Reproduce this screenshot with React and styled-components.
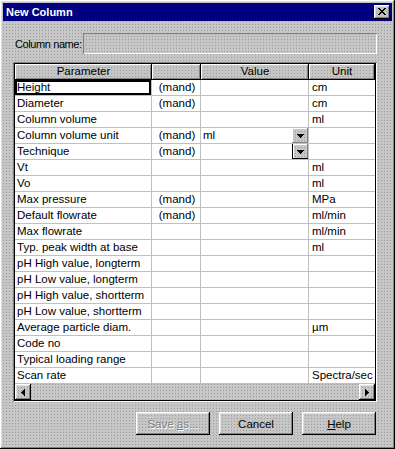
import React from "react";
import styled, { createGlobalStyle, css } from "styled-components";

const GlobalStyle = createGlobalStyle`
  html, body {
    margin: 0;
    padding: 0;
    background: #c0c0c0;
  }
  * {
    box-sizing: border-box;
  }
`;

// dithered grey face, like the old 256 colour screenshots
const dither = css`
  background-color: #9c9c9c;
  background-image: conic-gradient(from 270deg at 1px 1px, transparent 90deg, #c6c6c6 0);
  background-size: 3px 3px;
`;

const raised = css`
  box-shadow: inset -1px -1px #000, inset 1px 1px #fff, inset -2px -2px #808080,
    inset 2px 2px #dfdfdf;
`;

const Window = styled.div`
  ${dither};
  width: 395px;
  height: 449px;
  padding: 3px;
  display: flex;
  flex-direction: column;
  font-family: "Liberation Sans", Arial, sans-serif;
  font-size: 11.5px;
  color: #000;
  ${raised};
`;

const TitleBar = styled.div`
  height: 18px;
  background: #000080;
  display: flex;
  align-items: center;
  justify-content: space-between;
  padding: 0 2px 0 2px;
`;

const Title = styled.span`
  color: #fff;
  font-weight: bold;
  font-size: 11px;
  margin-left: 1px;
`;

const CloseButton = styled.div`
  width: 16px;
  height: 14px;
  background: #c0c0c0;
  ${raised};
  display: flex;
  align-items: center;
  justify-content: center;
  padding-bottom: 1px;
`;

const Body = styled.div`
  flex: 1;
  display: flex;
  flex-direction: column;
  padding: 12px 15px 0 10px;
`;

const NameRow = styled.div`
  display: flex;
  align-items: center;
  height: 21px;
`;

const Label = styled.span`
  width: 70px;
  padding-left: 2px;
  font-size: 11px;
  letter-spacing: -0.4px;
  white-space: nowrap;
`;

const NameField = styled.div`
  flex: 1;
  height: 21px;
  ${dither};
  box-shadow: inset 1px 1px #808080, inset -1px -1px #fff, inset 2px 2px #c0c0c0;
`;

const TableFrame = styled.div`
  margin-top: 8px;
  padding: 2px;
  box-shadow: inset 1px 1px #808080, inset -1px -1px #fff, inset 2px 2px #000,
    inset -2px -2px #000;
  display: flex;
  flex-direction: column;
`;

const Grid = styled.div`
  display: grid;
  grid-template-columns: 137px 49px 108px 66px;
  background: #fff;
`;

const HeaderCell = styled.div`
  ${dither};
  height: 16px;
  line-height: 15px;
  text-align: center;
  box-shadow: inset -1px -1px #000, inset 1px 1px #fff, inset -2px -2px #808080;
`;

const Cell = styled.div`
  height: 16px;
  line-height: 15px;
  padding-left: ${(p) => (p.$pad ? p.$pad : 2)}px;
  border-right: ${(p) => (p.$last ? "none" : "1px solid #c0c0c0")};
  border-bottom: 1px solid #c0c0c0;
  white-space: nowrap;
  overflow: hidden;
  display: flex;
  justify-content: ${(p) => (p.$center ? "center" : "flex-start")};
  ${(p) =>
    p.$selected &&
    css`
      box-shadow: inset 0 0 0 2px #000;
    `}
`;

const CellText = styled.span`
  flex: 1;
`;

const DropButton = styled.div`
  width: 16px;
  height: 15px;
  ${dither};
  display: flex;
  align-items: center;
  justify-content: center;
  box-shadow: ${(p) =>
    p.$focus
      ? "inset 1px 0 #000, inset 0 -1px #000, inset -1px -1px #808080, inset 2px 1px #fff"
      : "inset -1px -1px #808080, inset 1px 1px #fff"};
`;

const ScrollBar = styled.div`
  height: 16px;
  display: flex;
`;

const ScrollTrack = styled.div`
  flex: 1;
  ${dither};
`;

const ArrowButton = styled.div`
  width: 16px;
  height: 16px;
  ${dither};
  ${raised};
  display: flex;
  align-items: center;
  justify-content: center;
`;

const ButtonRow = styled.div`
  display: flex;
  justify-content: flex-end;
  gap: 9px;
  margin-top: 10px;
  padding-right: 1px;
`;

const Button = styled.div`
  width: 74px;
  height: 23px;
  ${dither};
  ${raised};
  display: flex;
  align-items: center;
  justify-content: center;
  color: ${(p) => (p.$disabled ? "#808080" : "#000")};
  text-shadow: ${(p) => (p.$disabled ? "1px 1px #fff" : "none")};
`;

const Key = styled.span`
  text-decoration: underline;
`;

const CloseIcon = () => (
  <svg width="8" height="7" viewBox="0 0 8 7" shapeRendering="crispEdges">
    <path
      fill="#000"
      d="M0 0h2v1H0zM6 0h2v1H6zM1 1h2v1H1zM5 1h2v1H5zM2 2h4v1H2zM3 3h2v1H3zM2 4h4v1H2zM1 5h2v1H1zM5 5h2v1H5zM0 6h2v1H0zM6 6h2v1H6z"
    />
  </svg>
);

const DownArrow = () => (
  <svg width="7" height="4" viewBox="0 0 7 4" shapeRendering="crispEdges">
    <path fill="#000" d="M0 0h7v1H0zM1 1h5v1H1zM2 2h3v1H2zM3 3h1v1H3z" />
  </svg>
);

const SideArrow = ({ dir }) => (
  <svg width="4" height="7" viewBox="0 0 4 7" shapeRendering="crispEdges">
    {dir === "left" ? (
      <path fill="#000" d="M3 0h1v7H3zM2 1h1v5H2zM1 2h1v3H1zM0 3h1v1H0z" />
    ) : (
      <path fill="#000" d="M0 0h1v7H0zM1 1h1v5H1zM2 2h1v3H2zM3 3h1v1H3z" />
    )}
  </svg>
);

const rows = [
  ["Height", "(mand)", "", "cm"],
  ["Diameter", "(mand)", "", "cm"],
  ["Column volume", "", "", "ml"],
  ["Column volume unit", "(mand)", "ml", "", "drop"],
  ["Technique", "(mand)", "", "", "focus"],
  ["Vt", "", "", "ml"],
  ["Vo", "", "", "ml"],
  ["Max pressure", "(mand)", "", "MPa"],
  ["Default flowrate", "(mand)", "", "ml/min"],
  ["Max flowrate", "", "", "ml/min"],
  ["Typ. peak width at base", "", "", "ml"],
  ["pH High value, longterm", "", "", ""],
  ["pH Low value, longterm", "", "", ""],
  ["pH High value, shortterm", "", "", ""],
  ["pH Low value, shortterm", "", "", ""],
  ["Average particle diam.", "", "", "µm"],
  ["Code no", "", "", ""],
  ["Typical loading range", "", "", ""],
  ["Scan rate", "", "", "Spectra/sec"],
];

export default function App() {
  return (
    <>
      <GlobalStyle />
      <Window>
        <TitleBar>
          <Title>New Column</Title>
          <CloseButton>
            <CloseIcon />
          </CloseButton>
        </TitleBar>
        <Body>
          <NameRow>
            <Label>Column name:</Label>
            <NameField />
          </NameRow>
          <TableFrame>
            <Grid>
              <HeaderCell>Parameter</HeaderCell>
              <HeaderCell />
              <HeaderCell>Value</HeaderCell>
              <HeaderCell>Unit</HeaderCell>
              {rows.map(([param, mand, value, unit, drop], i) => (
                <React.Fragment key={param}>
                  <Cell $selected={i === 0}>{param}</Cell>
                  <Cell $center>{mand}</Cell>
                  <Cell>
                    <CellText>{value}</CellText>
                    {drop && (
                      <DropButton $focus={drop === "focus"}>
                        <DownArrow />
                      </DropButton>
                    )}
                  </Cell>
                  <Cell $last $pad={3}>
                    {unit}
                  </Cell>
                </React.Fragment>
              ))}
            </Grid>
            <ScrollBar>
              <ArrowButton>
                <SideArrow dir="left" />
              </ArrowButton>
              <ScrollTrack />
              <ArrowButton>
                <SideArrow dir="right" />
              </ArrowButton>
            </ScrollBar>
          </TableFrame>
          <ButtonRow>
            <Button $disabled>
              <span>
                Save <Key>a</Key>s...
              </span>
            </Button>
            <Button>Cancel</Button>
            <Button>
              <span>
                <Key>H</Key>elp
              </span>
            </Button>
          </ButtonRow>
        </Body>
      </Window>
    </>
  );
}
